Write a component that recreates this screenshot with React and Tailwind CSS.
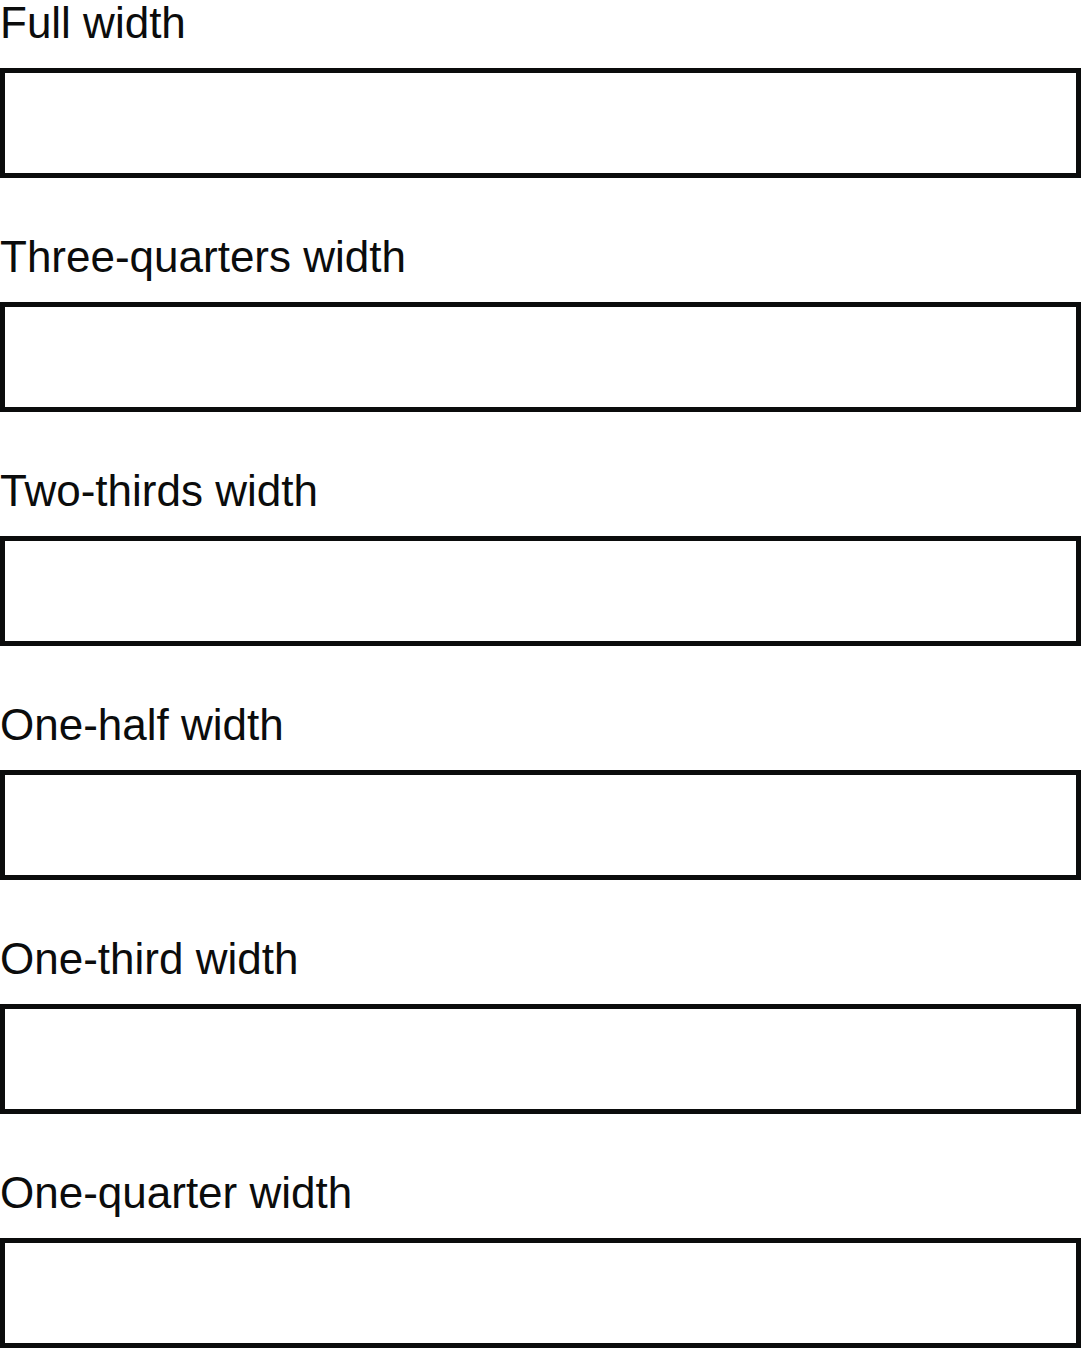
const fields = [
  'Full width',
  'Three-quarters width',
  'Two-thirds width',
  'One-half width',
  'One-third width',
  'One-quarter width',
];

export default function App() {
  return (
    <div className="bg-white text-[#0b0c0c] font-['Liberation_Sans',Arial,sans-serif]">
      {fields.map((label) => (
        <div key={label} className="mb-[56px]">
          <label className="block text-[44px] leading-[46px] mb-[22px]">{label}</label>
          <input type="text" className="block w-full h-[110px] border-[5px] border-[#0b0c0c] bg-white outline-none" />
        </div>
      ))}
    </div>
  );
}
